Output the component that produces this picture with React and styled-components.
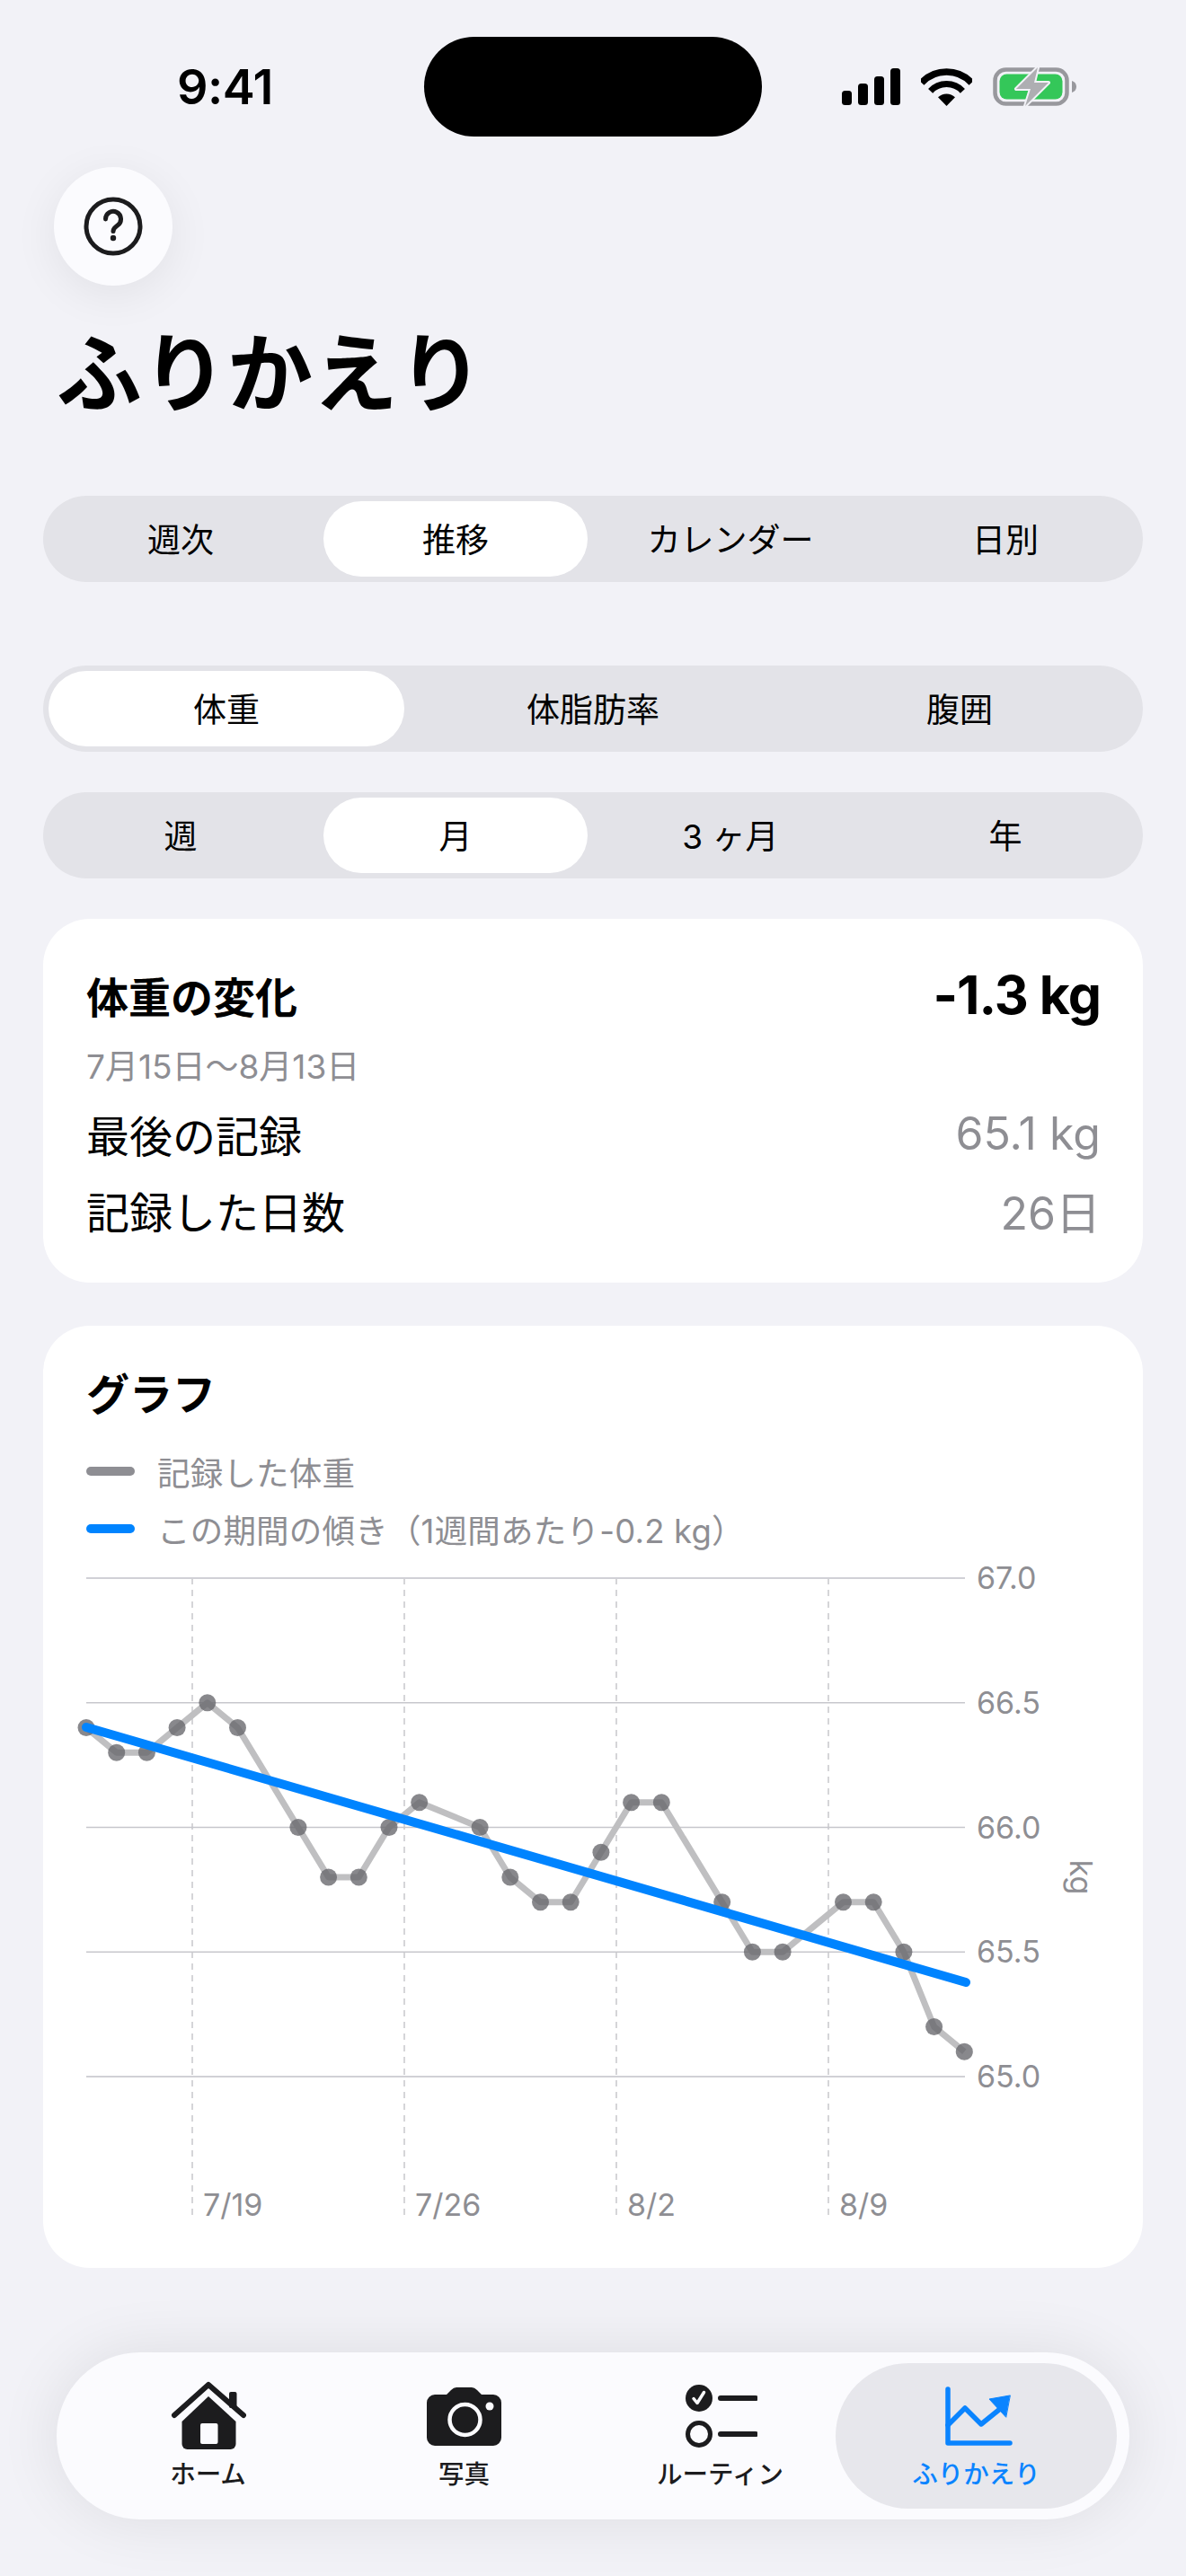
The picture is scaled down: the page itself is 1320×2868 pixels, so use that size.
import React from 'react';
import styled, { createGlobalStyle } from 'styled-components';

const GlobalStyle = createGlobalStyle`
  html, body {
    margin: 0;
    padding: 0;
    background: #f2f2f7;
  }
  body {
    font-family: Inter, "Noto Sans CJK JP", sans-serif;
    color: #000;
  }
`;

const Page = styled.div`
  width: 1320px;
  height: 2868px;
  overflow: hidden;
  background: #f2f2f7;
`;

const StatusBar = styled.div`
  display: grid;
  grid-template-columns: 472px 376px 1fr;
  align-items: center;
  height: 111px;
  padding-top: 41px;
`;

const Time = styled.div`
  padding-left: 197px;
  font-size: 54px;
  font-weight: 600;
  line-height: 60px;
  letter-spacing: -0.5px;
`;

const Island = styled.div`
  height: 111px;
  border-radius: 56px;
  background: #000;
`;

const StatusIcons = styled.div`
  display: flex;
  align-items: center;
  gap: 23px;
  padding-left: 89px;
`;

const Signal = styled.div`
  display: flex;
  align-items: flex-end;
  gap: 7px;
  height: 41px;
`;

const SignalBar = styled.span`
  width: 11px;
  height: ${(p) => p.$h}px;
  border-radius: 3.5px;
  background: #000;
`;

const HelpButton = styled.button`
  display: flex;
  align-items: center;
  justify-content: center;
  width: 132px;
  height: 132px;
  margin: 34px 0 0 60px;
  padding: 0;
  border: none;
  border-radius: 50%;
  background: #fbfbfe;
  box-shadow: 0 10px 50px rgba(0, 0, 0, 0.07);
`;

const Title = styled.h1`
  margin: 53px 0 0 63px;
  font-size: 95px;
  font-weight: 700;
  line-height: 92px;
`;

const Segments = styled.div`
  display: grid;
  grid-template-columns: repeat(${(p) => p.$count}, 1fr);
  height: 96px;
  margin: ${(p) => p.$top}px 48px 0;
  border-radius: 48px;
  background: #e3e3e8;
`;

const Segment = styled.div`
  display: flex;
  align-items: center;
  justify-content: center;
  margin: 6px;
  padding-bottom: 3px;
  border-radius: 42px;
  background: ${(p) => (p.$active ? '#fff' : 'transparent')};
  font-size: 37px;
  font-weight: 400;
`;

const Card = styled.section`
  margin: ${(p) => p.$top}px 48px 0;
  padding: ${(p) => p.$pad};
  border-radius: 52px;
  background: #fff;
`;

const Row = styled.div`
  display: flex;
  align-items: center;
  justify-content: space-between;
  height: ${(p) => p.$h}px;
  margin-top: ${(p) => p.$top || 0}px;
`;

const RowTitle = styled.div`
  font-size: ${(p) => (p.$bold ? 47 : 48)}px;
  font-weight: ${(p) => (p.$bold ? 700 : 400)};
`;

const Change = styled.div`
  font-size: 59px;
  font-weight: 700;
  letter-spacing: -1px;
`;

const RowValue = styled.div`
  font-size: 50px;
  color: #8e8e93;
`;

const DateRange = styled.div`
  height: 40px;
  margin-top: 29px;
  font-size: 37px;
  line-height: 40px;
  color: #8e8e93;
`;

const GraphHeader = styled.h2`
  margin: 0 48px;
  font-size: 48px;
  font-weight: 700;
  line-height: 60px;
`;

const LegendRow = styled.div`
  display: flex;
  align-items: center;
  gap: 25px;
  height: 44px;
  margin: ${(p) => p.$top}px 48px 0;
  font-size: 36.5px;
  letter-spacing: 0.2px;
  color: #8e8e93;
`;

const LegendSwatch = styled.span`
  width: 54px;
  height: 10px;
  border-radius: 5px;
  background: ${(p) => p.$color};
`;

const ChartSvg = styled.svg`
  display: block;
  width: 1224px;
  height: 795px;
  margin-top: 6px;
`;

const AxisText = styled.text`
  font-family: Inter, "Noto Sans CJK JP", sans-serif;
  font-size: 34px;
  fill: #8e8e93;
`;

const TabBar = styled.nav`
  display: flex;
  width: 1194px;
  height: 186px;
  margin: 94px 0 0 63px;
  padding: 12px 27px 12px 26px;
  box-sizing: border-box;
  border-radius: 93px;
  background: #fbfbfe;
  box-shadow: 0 0 70px rgba(0, 0, 0, 0.09);
`;

const Tab = styled.div`
  display: flex;
  flex-direction: column;
  align-items: center;
  flex: none;
  width: ${(p) => (p.$active ? 313 : 285)}px;
  height: 162px;
  margin: ${(p) => (p.$active ? '0 -14px' : '0')};
  border-radius: 81px;
  background: ${(p) => (p.$active ? '#e7e7ec' : 'transparent')};
  color: ${(p) => (p.$active ? '#0a84ff' : '#1c1c1e')};
`;

const TabIcon = styled.div`
  display: flex;
  align-items: center;
  justify-content: center;
  height: 84px;
  margin-top: 17px;
`;

const TabLabel = styled.div`
  margin-top: 3px;
  font-size: 28.5px;
  font-weight: 500;
  line-height: 40px;
`;

const weights = [
  [0, 66.4], [1, 66.3], [2, 66.3], [3, 66.4], [4, 66.5], [5, 66.4], [7, 66.0], [8, 65.8], [9, 65.8],
  [10, 66.0], [11, 66.1], [13, 66.0], [14, 65.8], [15, 65.7], [16, 65.7], [17, 65.9], [18, 66.1],
  [19, 66.1], [21, 65.7], [22, 65.5], [23, 65.5], [25, 65.7], [26, 65.7], [27, 65.5], [28, 65.2], [29, 65.1],
];

const xAt = (day) => 96 + day * 33.7;
const yAt = (kg) => 1757 + (67 - kg) * 277.5;

const ticks = [
  { x: 214, label: '7/19' },
  { x: 450, label: '7/26' },
  { x: 686, label: '8/2' },
  { x: 922, label: '8/9' },
];

function Chart() {
  const line = weights.map(([d, kg]) => `${xAt(d)},${yAt(kg)}`).join(' ');
  return (
    <ChartSvg viewBox="48 1730 1224 795">
      {ticks.map((t) => (
        <g key={t.x}>
          <line x1={t.x} x2={t.x} y1="1757" y2="2471" stroke="#c7c7cc" strokeWidth="1.5" strokeDasharray="7 6" />
          <AxisText x={t.x + 12} y="2467">{t.label}</AxisText>
        </g>
      ))}
      {[67, 66.5, 66, 65.5, 65].map((kg, i) => (
        <g key={kg}>
          <line
            x1="96"
            x2="1074"
            y1={yAt(kg)}
            y2={yAt(kg)}
            stroke={i === 0 || i === 4 ? '#d1d1d6' : '#c7c7cc'}
            strokeWidth={i === 0 || i === 4 ? 2 : 1.5}
          />
          <AxisText x="1087" y={yAt(kg) + 12}>{kg.toFixed(1)}</AxisText>
        </g>
      ))}
      <AxisText x="1200" y="2090" transform="rotate(90 1200 2090)" textAnchor="middle" dominantBaseline="middle">
        kg
      </AxisText>
      <polyline points={line} fill="none" stroke="#bfbfc1" strokeWidth="7" strokeLinejoin="round" />
      {weights.map(([d, kg]) => (
        <circle key={d} cx={xAt(d)} cy={yAt(kg)} r="9.5" fill="#66666b" fillOpacity="0.78" />
      ))}
      <line x1="96" y1="1923" x2="1075" y2="2207" stroke="#0084ff" strokeWidth="10" strokeLinecap="round" />
    </ChartSvg>
  );
}

function WifiIcon() {
  return (
    <svg width="57" height="42" viewBox="0 0 57 42">
      <path d="M0.7 16.1A38 38 0 0 1 56.3 16.1" fill="none" stroke="#000" strokeWidth="7.5" />
      <path d="M10.6 25.3A24.5 24.5 0 0 1 46.4 25.3" fill="none" stroke="#000" strokeWidth="7" />
      <path d="M28.5 42L19 32.3A13.5 13.5 0 0 1 38 32.3Z" fill="#000" />
    </svg>
  );
}

function BatteryIcon() {
  return (
    <svg width="93" height="43" viewBox="0 0 93 43">
      <rect x="2.5" y="2.5" width="80" height="38" rx="12" fill="none" stroke="#98989d" strokeWidth="4.5" />
      <rect x="7.5" y="7.5" width="70" height="28" rx="8" fill="#34c759" />
      <path d="M88 15c3 1 5 3 5 6.5s-2 5.5-5 6.5z" fill="#98989d" />
      <path d="M50 0L26 24H42L36 43L62 17H46Z" fill="#aeaeb2" stroke="#f2f2f7" strokeWidth="4" paintOrder="stroke" strokeLinejoin="round" />
    </svg>
  );
}

function HelpIcon() {
  return (
    <svg width="66" height="66" viewBox="0 0 66 66" fill="none" stroke="#1c1c1e" strokeLinecap="round">
      <circle cx="33" cy="33" r="30" strokeWidth="5" />
      <path d="M24.5 25a8.5 8.5 0 1 1 13.5 6.8c-3 2.2-5 3.4-5 6.7" strokeWidth="5" />
      <circle cx="33" cy="46" r="3.2" fill="#1c1c1e" stroke="none" />
    </svg>
  );
}

function HomeIcon() {
  return (
    <svg width="84" height="80" viewBox="0 0 84 80">
      <rect x="65" y="13" width="8.5" height="18" rx="2" fill="#1c1c1e" />
      <path d="M4 39L42 5L81 39" fill="none" stroke="#1c1c1e" strokeWidth="6" strokeLinecap="round" strokeLinejoin="round" />
      <path d="M42 18L72.5 46V71a6 6 0 0 1-6 6H18.5a6 6 0 0 1-6-6V46Z" fill="#1c1c1e" />
      <rect x="33" y="48" width="19.5" height="23" rx="2" fill="#fbfbfe" />
    </svg>
  );
}

function CameraIcon() {
  return (
    <svg width="83" height="65" viewBox="0 0 83 65">
      <path d="M9 8H22L27 3Q30 0 33 0H50Q53 0 56 3L61 8H74A9 9 0 0 1 83 17V56A9 9 0 0 1 74 65H9A9 9 0 0 1 0 56V17A9 9 0 0 1 9 8Z" fill="#1c1c1e" />
      <circle cx="42.5" cy="36" r="17" fill="none" stroke="#fbfbfe" strokeWidth="4.5" />
      <circle cx="70" cy="21" r="4.5" fill="#fbfbfe" />
    </svg>
  );
}

function RoutineIcon() {
  return (
    <svg width="82" height="74" viewBox="0 0 82 74" fill="none" strokeLinecap="round">
      <circle cx="17" cy="17" r="15" fill="#1c1c1e" />
      <path d="M11 17.5L15 22.5L22.5 10.5" stroke="#fbfbfe" strokeWidth="3.5" strokeLinejoin="round" />
      <path d="M41 17H80M41 57H80" stroke="#1c1c1e" strokeWidth="6" />
      <circle cx="17" cy="57" r="12.5" stroke="#1c1c1e" strokeWidth="5" />
    </svg>
  );
}

function ReviewIcon() {
  return (
    <svg width="82" height="70" viewBox="-3 0 82 70" fill="none" stroke="#0a84ff" strokeLinecap="round" strokeLinejoin="round">
      <path d="M6 5V65H75" strokeWidth="5.5" />
      <path d="M6 45L25 26L43 44L64 27" strokeWidth="5.5" />
      <path d="M75 12L52 16L70.5 36Z" fill="#0a84ff" strokeWidth="1" />
    </svg>
  );
}

const topTabs = ['週次', '推移', 'カレンダー', '日別'];
const metricTabs = ['体重', '体脂肪率', '腹囲'];
const rangeTabs = ['週', '月', '3 ヶ月', '年'];

const navItems = [
  { label: 'ホーム', icon: <HomeIcon /> },
  { label: '写真', icon: <CameraIcon /> },
  { label: 'ルーティン', icon: <RoutineIcon /> },
  { label: 'ふりかえり', icon: <ReviewIcon />, active: true },
];

function SegmentGroup({ items, active, top }) {
  return (
    <Segments $count={items.length} $top={top}>
      {items.map((item) => (
        <Segment key={item} $active={item === active}>{item}</Segment>
      ))}
    </Segments>
  );
}

export default function App() {
  return (
    <Page>
      <GlobalStyle />
      <StatusBar>
        <Time>9:41</Time>
        <Island />
        <StatusIcons>
          <Signal>
            {[16, 24, 32, 41].map((h) => (
              <SignalBar key={h} $h={h} />
            ))}
          </Signal>
          <WifiIcon />
          <BatteryIcon />
        </StatusIcons>
      </StatusBar>

      <HelpButton type="button" aria-label="help">
        <HelpIcon />
      </HelpButton>
      <Title>ふりかえり</Title>

      <SegmentGroup items={topTabs} active="推移" top={89} />
      <SegmentGroup items={metricTabs} active="体重" top={93} />
      <SegmentGroup items={rangeTabs} active="月" top={45} />

      <Card $top={45} $pad="52px 47px 53px 48px">
        <Row $h={64}>
          <RowTitle $bold>体重の変化</RowTitle>
          <Change>-1.3 kg</Change>
        </Row>
        <DateRange>7月15日～8月13日</DateRange>
        <Row $h={56} $top={26}>
          <RowTitle>最後の記録</RowTitle>
          <RowValue>65.1 kg</RowValue>
        </Row>
        <Row $h={56} $top={29}>
          <RowTitle>記録した日数</RowTitle>
          <RowValue>26日</RowValue>
        </Row>
      </Card>

      <Card $top={48} $pad="47px 0 0">
        <GraphHeader>グラフ</GraphHeader>
        <LegendRow $top={33}>
          <LegendSwatch $color="#8e8e93" />
          記録した体重
        </LegendRow>
        <LegendRow $top={20}>
          <LegendSwatch $color="#0084ff" />
          この期間の傾き（1週間あたり-0.2 kg）
        </LegendRow>
        <Chart />
      </Card>

      <TabBar>
        {navItems.map((item) => (
          <Tab key={item.label} $active={item.active}>
            <TabIcon>{item.icon}</TabIcon>
            <TabLabel>{item.label}</TabLabel>
          </Tab>
        ))}
      </TabBar>
    </Page>
  );
}
